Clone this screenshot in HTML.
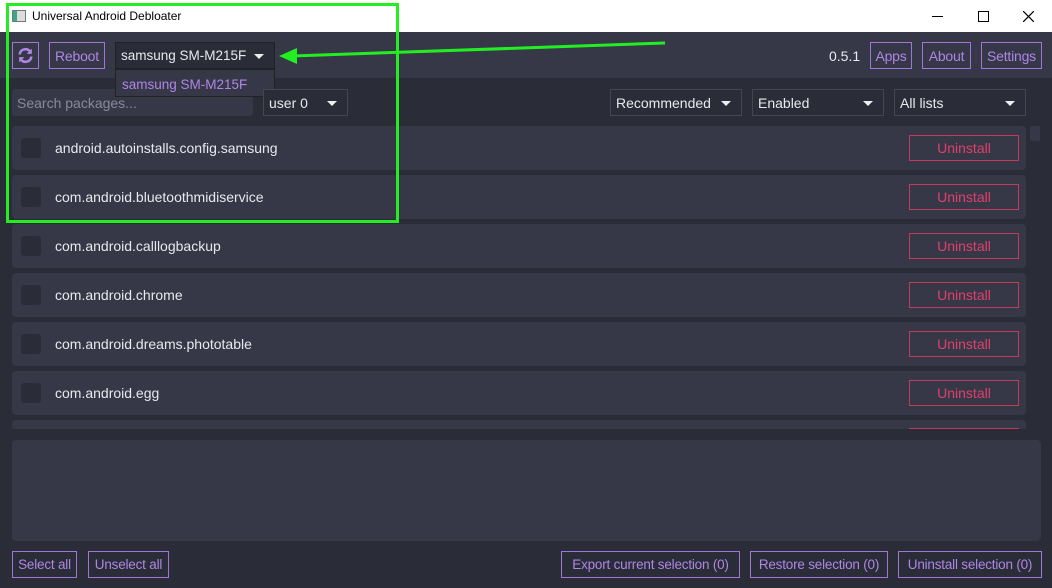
<!DOCTYPE html><html><head><style>
*{margin:0;padding:0;box-sizing:border-box}
body{width:1052px;height:588px;overflow:hidden;background:#2a2c37;font-family:"Liberation Sans",sans-serif;position:relative;font-size:14px}
.a{position:absolute}
.btn{position:absolute;border:1px solid #9e77d6;color:#ae86e6;font-size:14px;display:flex;align-items:center;justify-content:center;letter-spacing:-0.2px}
.dd{position:absolute;background:#2a2c37;border:1px solid #444656;color:#e8e8ee;font-size:14px;padding-left:5px;display:flex;align-items:center}
.dd:after{content:"";position:absolute;right:10px;top:50%;margin-top:-2px;border:5px solid transparent;border-top:5px solid #eee;border-bottom:0}
.row{position:absolute;left:12px;width:1014px;height:44px;background:#363847;border-radius:4px}
.row .cb{position:absolute;left:9px;top:12px;width:20px;height:20px;background:#2a2c37;border-radius:3px}
.row .t{position:absolute;left:43px;top:14px;color:#e8e8ee;font-size:14px}
.row .u{position:absolute;left:897px;top:9px;width:110px;height:26px;border:1px solid #c23a5c;color:#e0406a;display:flex;align-items:center;justify-content:center;font-size:14px}
</style></head><body>
<div class="a" style="left:0;top:0;width:1052px;height:32px;background:#fff"></div>
<div class="a" style="left:12px;top:10px;width:14px;height:12px;border:1px solid #777;background:linear-gradient(90deg,#3a8 0 4px,#ddd 4px)"></div>
<div class="a" style="left:32px;top:9px;font-size:12px;color:#000">Universal Android Debloater</div>
<div class="a" style="left:932px;top:16px;width:11px;height:1px;background:#000"></div>
<div class="a" style="left:978px;top:11px;width:11px;height:11px;border:1px solid #000"></div>
<svg class="a" style="left:1023px;top:11px" width="11" height="11"><path d="M0 0L11 11M11 0L0 11" stroke="#000" stroke-width="1.2"/></svg>
<div class="a" style="left:0;top:32px;width:1052px;height:46px;background:#363847"></div>
<div class="btn" style="left:12px;top:42px;width:27px;height:27px">
<svg width="17" height="17" viewBox="0 0 16 16"><path d="M2.5 7A5.5 5.5 0 0 1 12.3 4.2" stroke="#ae86e6" stroke-width="2.4" fill="none"/><path d="M14 1.5V6.5H9Z" fill="#ae86e6"/><path d="M13.5 9A5.5 5.5 0 0 1 3.7 11.8" stroke="#ae86e6" stroke-width="2.4" fill="none"/><path d="M2 14.5V9.5H7Z" fill="#ae86e6"/></svg></div>
<div class="btn" style="left:49px;top:42px;width:56px;height:27px">Reboot</div>
<div class="dd" style="left:115px;top:42px;width:160px;height:27px;border-color:#222;font-size:13.5px">samsung SM-M215F</div>
<div class="a" style="left:829px;top:48px;color:#e8e8ee">0.5.1</div>
<div class="btn" style="left:870px;top:42px;width:42px;height:27px">Apps</div>
<div class="btn" style="left:922px;top:42px;width:49px;height:27px">About</div>
<div class="btn" style="left:981px;top:42px;width:61px;height:27px">Settings</div>
<div class="a" style="left:12px;top:89px;width:241px;height:27px;background:#363847;border-radius:3px;color:#888a96;padding:6px 0 0 5px">Search packages...</div>
<div class="a" style="left:115px;top:69px;width:160px;height:28px;background:#363847;border:1px solid #222;color:#ae86e6;padding:7px 0 0 6px;font-size:13.5px">samsung SM-M215F</div>
<div class="dd" style="left:263px;top:89px;width:85px;height:27px">user 0</div>
<div class="dd" style="left:610px;top:89px;width:132px;height:27px">Recommended</div>
<div class="dd" style="left:752px;top:89px;width:132px;height:27px">Enabled</div>
<div class="dd" style="left:894px;top:89px;width:132px;height:27px">All lists</div>
<div class="a" style="left:1030px;top:126px;width:10px;height:15px;background:#363847;border-radius:2px"></div>
<div class="row" style="top:126px"><div class="cb"></div><div class="t">android.autoinstalls.config.samsung</div><div class="u">Uninstall</div></div>
<div class="row" style="top:175px"><div class="cb"></div><div class="t">com.android.bluetoothmidiservice</div><div class="u">Uninstall</div></div>
<div class="row" style="top:224px"><div class="cb"></div><div class="t">com.android.calllogbackup</div><div class="u">Uninstall</div></div>
<div class="row" style="top:273px"><div class="cb"></div><div class="t">com.android.chrome</div><div class="u">Uninstall</div></div>
<div class="row" style="top:322px"><div class="cb"></div><div class="t">com.android.dreams.phototable</div><div class="u">Uninstall</div></div>
<div class="row" style="top:371px"><div class="cb"></div><div class="t">com.android.egg</div><div class="u">Uninstall</div></div>
<div class="row" style="top:420px;height:9px;border-radius:4px 4px 0 0"><div class="a" style="left:897px;top:8px;width:110px;height:1px;background:#c23a5c"></div></div>
<div class="a" style="left:12px;top:440px;width:1029px;height:101px;background:#363847;border-radius:4px"></div>
<div class="btn" style="left:12px;top:551px;width:65px;height:27px;font-size:13.5px">Select all</div>
<div class="btn" style="left:88px;top:551px;width:81px;height:27px;font-size:13.5px">Unselect all</div>
<div class="btn" style="left:561px;top:551px;width:179px;height:27px;font-size:13.5px">Export current selection (0)</div>
<div class="btn" style="left:750px;top:551px;width:138px;height:27px;font-size:13.5px">Restore selection (0)</div>
<div class="btn" style="left:898px;top:551px;width:144px;height:27px;font-size:13.5px">Uninstall selection (0)</div>
<div class="a" style="left:6px;top:3px;width:393px;height:220px;border:3px solid #22ee22"></div>
<svg class="a" style="left:0;top:0" width="1052" height="588"><line x1="665" y1="43" x2="292" y2="56" stroke="#22ee22" stroke-width="3"/><polygon points="279,56 297,48 297,64" fill="#22ee22"/></svg>
</body></html>
